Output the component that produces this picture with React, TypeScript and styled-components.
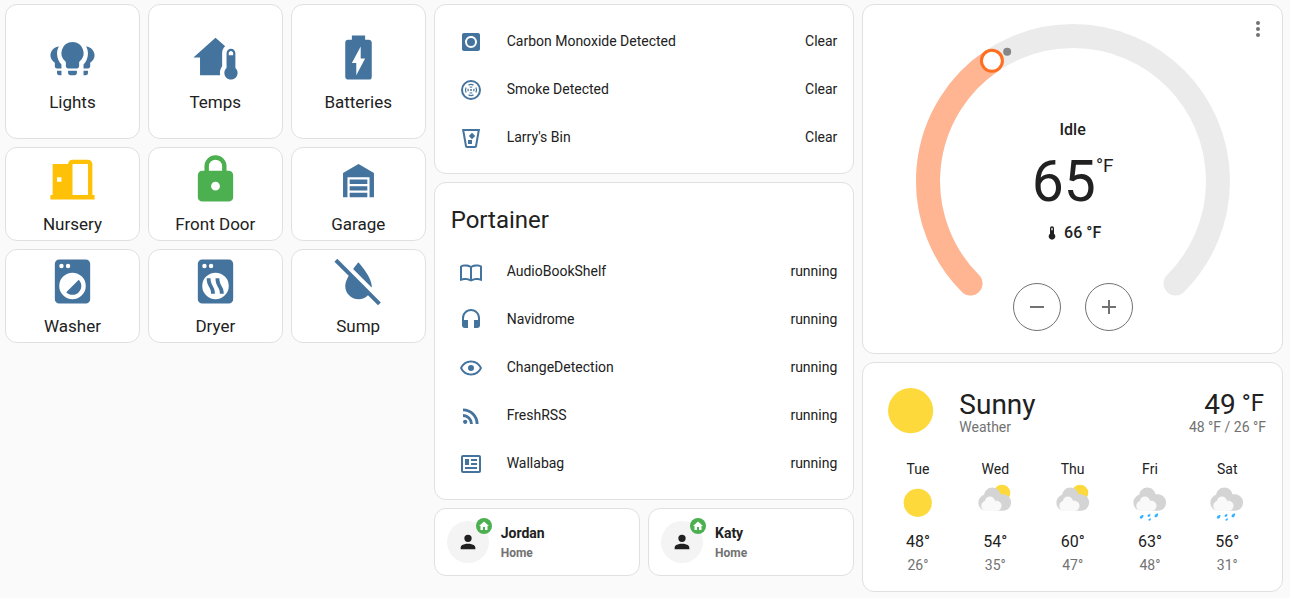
import React from "react";
import styled, { createGlobalStyle } from "styled-components";

const BLUE = "#44739e";
const GREEN = "#4caf50";
const AMBER = "#ffc107";
const TEXT = "#212121";
const MUTED = "#727272";

const GlobalStyle = createGlobalStyle`
  *, *::before, *::after { box-sizing: border-box; }
  body {
    margin: 0;
    background: #fafafa;
    color: ${TEXT};
    font-family: Roboto, "Liberation Sans", sans-serif;
    font-size: 14px;
    line-height: 20px;
  }
`;

const Dashboard = styled.main`
  display: grid;
  grid-template-columns: repeat(3, minmax(0, 1fr));
  align-items: start;
  gap: 8px;
  padding: 4px 7px 4px 5px;
`;

const Column = styled.div`
  display: flex;
  flex-direction: column;
  gap: 8px;
`;

const Card = styled.section`
  background: #fff;
  border: 1px solid #e0e0e0;
  border-radius: 12px;
`;

const TileRow = styled.div`
  display: grid;
  grid-template-columns: repeat(3, minmax(0, 1fr));
  gap: 8px;
`;

const Tile = styled.button<{ $square?: boolean }>`
  display: flex;
  flex-direction: column;
  align-items: center;
  justify-content: center;
  gap: 8px;
  padding: ${(p) => (p.$square ? "6px 5px 5px" : "5px 5px 6px")};
  aspect-ratio: ${(p) => (p.$square ? "1" : "auto")};
  background: #fff;
  border: 1px solid #e0e0e0;
  border-radius: 12px;
  color: ${TEXT};
  font: inherit;
  font-size: 17px;
  line-height: 20px;
  cursor: pointer;
`;

const Glyph = styled.svg<{ $size: number; $color?: string }>`
  display: block;
  flex: none;
  width: ${(p) => p.$size}px;
  height: ${(p) => p.$size}px;
  fill: ${(p) => p.$color ?? "currentColor"};
`;

const EntityList = styled.ul`
  display: flex;
  flex-direction: column;
  gap: 8px;
  margin: 0;
  padding: 16px;
  list-style: none;
`;

const EntityRow = styled.li`
  display: flex;
  align-items: center;
  height: 40px;
`;

const EntityIcon = styled.span`
  display: flex;
  justify-content: center;
  width: 40px;
  margin-right: 16px;
  padding-top: 2px;
`;

const EntityName = styled.span`
  flex: 1;
`;

const CardTitle = styled.h2`
  margin: 0;
  padding: 13px 16px 0;
  font-size: 24px;
  font-weight: 400;
  line-height: 48px;
`;

const TitledList = styled(EntityList)`
  padding-top: 7px;
`;

const People = styled.div`
  display: grid;
  grid-template-columns: repeat(2, minmax(0, 1fr));
  gap: 8px;
`;

const PersonCard = styled.button`
  display: flex;
  align-items: center;
  gap: 12px;
  padding: 12px;
  background: #fff;
  border: 1px solid #e0e0e0;
  border-radius: 12px;
  color: ${TEXT};
  font: inherit;
  font-weight: 700;
  text-align: left;
  cursor: pointer;
`;

const Avatar = styled.span`
  position: relative;
  display: grid;
  place-items: center;
  width: 42px;
  height: 42px;
  border-radius: 50%;
  background: #f4f4f4;
`;

const HomeBadge = styled.span`
  position: absolute;
  top: -3px;
  right: -3px;
  display: grid;
  place-items: center;
  width: 16px;
  height: 16px;
  border-radius: 50%;
  background: ${GREEN};
  color: #fff;
`;

const PersonText = styled.span`
  display: flex;
  flex-direction: column;
  padding-top: 2px;
`;

const PersonState = styled.span`
  color: ${MUTED};
  font-size: 12px;
`;

const ThermostatCard = styled(Card)`
  position: relative;
  display: grid;
  justify-items: center;
  padding: 16px 16px 12px;
`;

const MenuButton = styled.button`
  position: absolute;
  top: 0;
  right: 0;
  display: grid;
  place-items: center;
  width: 48px;
  height: 48px;
  padding: 0;
  border: 0;
  background: none;
  color: ${MUTED};
  cursor: pointer;
`;

const Dial = styled.svg`
  grid-area: 1 / 1;
  display: block;
  width: 320px;
  height: 320px;
`;

const Reading = styled.div`
  grid-area: 1 / 1;
  align-self: center;
  display: flex;
  flex-direction: column;
  align-items: center;
  gap: 12px;
  padding-top: 1px;
  font-size: 16px;
  font-weight: 500;
`;

const Target = styled.div`
  display: flex;
  align-items: flex-start;
  font-size: 57px;
  font-weight: 400;
  line-height: 59px;
`;

const TargetUnit = styled.span`
  padding-top: 4px;
  font-size: 19px;
  line-height: 20px;
`;

const Current = styled.div`
  display: flex;
  align-items: center;
  gap: 4px;
`;

const Steppers = styled.div`
  grid-area: 1 / 1;
  align-self: end;
  display: flex;
  gap: 24px;
  padding-bottom: 10px;
`;

const Stepper = styled.button`
  display: grid;
  place-items: center;
  width: 48px;
  height: 48px;
  padding: 0;
  border: 1px solid ${MUTED};
  border-radius: 50%;
  background: none;
  color: ${MUTED};
  cursor: pointer;
`;

const WeatherCard = styled(Card)`
  display: flex;
  flex-direction: column;
  gap: 16px;
  padding: 16px;
`;

const WeatherNow = styled.div`
  display: flex;
  align-items: center;
  gap: 16px;
`;

const WeatherText = styled.div<{ $end?: boolean }>`
  display: flex;
  flex-direction: column;
  flex: ${(p) => (p.$end ? "none" : "1")};
  align-items: ${(p) => (p.$end ? "flex-end" : "flex-start")};
  padding-top: 8px;
  color: ${MUTED};
`;

const WeatherMain = styled.div`
  display: flex;
  gap: 6px;
  color: ${TEXT};
  font-size: 28px;
  line-height: 24px;
`;

const WeatherUnit = styled.span`
  padding-right: 2px;
  font-size: 24px;
  line-height: 20px;
`;

const Forecast = styled.div`
  display: grid;
  grid-template-columns: repeat(5, minmax(0, 1fr));
`;

const Day = styled.div`
  display: flex;
  flex-direction: column;
  align-items: center;
`;

const DayIcon = styled.div`
  padding: 4px 0 6px;
`;

const High = styled.span`
  font-size: 16px;
  line-height: 26px;
`;

const Low = styled.span`
  color: ${MUTED};
`;

const paths = {
  homeThermometer:
    "M19 8C20.11 8 21 8.9 21 10V16.76C21.61 17.31 22 18.11 22 19C22 20.66 20.66 22 19 22C17.34 22 16 20.66 16 19C16 18.11 16.39 17.31 17 16.76V10C17 8.9 17.9 8 19 8M19 9C18.45 9 18 9.45 18 10V11H20V10C20 9.45 19.55 9 19 9M5 20V12H2L12 3L16.4 6.96C15.54 7.69 15 8.78 15 10V15.97C14.37 16.84 14 17.87 14 19L14.1 20H5Z",
  battery:
    "M16.67,4H15V2H9V4H7.33A1.33,1.33 0 0,0 6,5.33V20.67C6,21.4 6.6,22 7.33,22H16.67A1.33,1.33 0 0,0 18,20.67V5.33C18,4.6 17.4,4 16.67,4M11,20V14.5H9L13,7V12.5H15L11,20Z",
  door: "M12,3C10.89,3 10,3.89 10,5H3V19H2V21H22V19H21V5C21,3.89 20.11,3 19,3H12M12,5H19V19H12V5M5,11H7V13H5V11Z",
  lock: "M12,17A2,2 0 0,0 14,15C14,13.89 13.1,13 12,13A2,2 0 0,0 10,15A2,2 0 0,0 12,17M18,8A2,2 0 0,1 20,10V20A2,2 0 0,1 18,22H6A2,2 0 0,1 4,20V10C4,8.89 4.9,8 6,8H7V6A5,5 0 0,1 12,1A5,5 0 0,1 17,6V8H18M12,3A3,3 0 0,0 9,6V8H15V6A3,3 0 0,0 12,3Z",
  garage: "M19,20H17V11H7V20H5V9L12,5L19,9V20M8,12H16V14H8V12M8,15H16V17H8V15M16,18V20H8V18H16Z",
  washer:
    "M14.83,11.17C16.39,12.73 16.39,15.27 14.83,16.83C13.27,18.39 10.73,18.39 9.17,16.83L14.83,11.17M6,2H18A2,2 0 0,1 20,4V20A2,2 0 0,1 18,22H6A2,2 0 0,1 4,20V4A2,2 0 0,1 6,2M7,4A1,1 0 0,0 6,5A1,1 0 0,0 7,6A1,1 0 0,0 8,5A1,1 0 0,0 7,4M10,4A1,1 0 0,0 9,5A1,1 0 0,0 10,6A1,1 0 0,0 11,5A1,1 0 0,0 10,4M12,8A6,6 0 0,0 6,14A6,6 0 0,0 12,20A6,6 0 0,0 18,14A6,6 0 0,0 12,8Z",
  dryer:
    "M6,2H18A2,2 0 0,1 20,4V20A2,2 0 0,1 18,22H6A2,2 0 0,1 4,20V4A2,2 0 0,1 6,2M7,4A1,1 0 0,0 6,5A1,1 0 0,0 7,6A1,1 0 0,0 8,5A1,1 0 0,0 7,4M10,4A1,1 0 0,0 9,5A1,1 0 0,0 10,6A1,1 0 0,0 11,5A1,1 0 0,0 10,4M12,8A6,6 0 0,0 6,14A6,6 0 0,0 12,20A6,6 0 0,0 18,14A6,6 0 0,0 12,8ZM8,10.5H9.75C9.75,14 11.75,14 11.75,17.5H10C10,14.3 8,14.3 8,10.5ZM12,10.5H13.75C13.75,14 15.75,14 15.75,17.5H14C14,14.3 12,14.3 12,10.5Z",
  waterOff:
    "M20.84 22.73L16.29 18.18C15.2 19.3 13.69 20 12 20C8.69 20 6 17.31 6 14C6 12.67 6.67 11.03 7.55 9.44L1.11 3L2.39 1.73L22.11 21.46L20.84 22.73M18 14C18 10 12 3.25 12 3.25S10.84 4.55 9.55 6.35L17.95 14.75C18 14.5 18 14.25 18 14Z",
  coDetector:
    "M12,18A6,6 0 0,0 18,12C18,8.68 15.31,6 12,6C8.68,6 6,8.68 6,12A6,6 0 0,0 12,18M19,3A2,2 0 0,1 21,5V19A2,2 0 0,1 19,21H5C3.89,21 3,20.1 3,19V5C3,3.89 3.89,3 5,3H19M8,12A4,4 0 0,1 12,8A4,4 0 0,1 16,12A4,4 0 0,1 12,16A4,4 0 0,1 8,12Z",
  bin: "M21.03,3L18,20.31C17.83,21.27 17,22 16,22H8C7,22 6.17,21.27 6,20.31L2.97,3H21.03M5.36,5L8,20H16L18.64,5H5.36M9,18V14H13V18H9M13,13.18L9.82,10L13,6.82L16.18,10L13,13.18Z",
  book: "M12 21.5C10.65 20.65 8.2 20 6.5 20C4.85 20 3.15 20.3 1.75 21.05C1.65 21.1 1.6 21.1 1.5 21.1C1.25 21.1 1 20.85 1 20.6V6C1.6 5.55 2.25 5.25 3 5C4.11 4.65 5.33 4.5 6.5 4.5C8.45 4.5 10.55 4.9 12 6C13.45 4.9 15.55 4.5 17.5 4.5C18.67 4.5 19.89 4.65 21 5C21.75 5.25 22.4 5.55 23 6V20.6C23 20.85 22.75 21.1 22.5 21.1C22.4 21.1 22.35 21.1 22.25 21.05C20.85 20.3 19.15 20 17.5 20C15.8 20 13.35 20.65 12 21.5M11 7.5C9.64 6.9 7.84 6.5 6.5 6.5C5.3 6.5 4.1 6.65 3 7V18.5C4.1 18.15 5.3 18 6.5 18C7.84 18 9.64 18.4 11 19V7.5M13 19C14.36 18.4 16.16 18 17.5 18C18.7 18 19.9 18.15 21 18.5V7C19.9 6.65 18.7 6.5 17.5 6.5C16.16 6.5 14.36 6.9 13 7.5V19Z",
  headphones:
    "M12,1C7,1 3,5 3,10V17A3,3 0 0,0 6,20H9V12H5V10A7,7 0 0,1 12,3A7,7 0 0,1 19,10V12H15V20H18A3,3 0 0,0 21,17V10C21,5 16.97,1 12,1Z",
  eye: "M12,9A3,3 0 0,1 15,12A3,3 0 0,1 12,15A3,3 0 0,1 9,12A3,3 0 0,1 12,9M12,4.5C17,4.5 21.27,7.61 23,12C21.27,16.39 17,19.5 12,19.5C7,19.5 2.73,16.39 1,12C2.73,7.61 7,4.5 12,4.5M3.18,12C4.83,15.36 8.24,17.5 12,17.5C15.76,17.5 19.17,15.36 20.82,12C19.17,8.64 15.76,6.5 12,6.5C8.24,6.5 4.83,8.64 3.18,12Z",
  rss: "M6.18,15.64A2.18,2.18 0 0,1 8.36,17.82C8.36,19 7.38,20 6.18,20C5,20 4,19 4,17.82A2.18,2.18 0 0,1 6.18,15.64M4,4.44A15.56,15.56 0 0,1 19.56,20H16.73A12.73,12.73 0 0,0 4,7.27V4.44M4,10.1A9.9,9.9 0 0,1 13.9,20H11.07A7.07,7.07 0 0,0 4,12.93V10.1Z",
  newspaper:
    "M20 5L20 19L4 19L4 5H20M20 3H4C2.89 3 2 3.89 2 5V19C2 20.11 2.89 21 4 21H20C21.11 21 22 20.11 22 19V5C22 3.89 21.11 3 20 3M18 15H6V17H18V15M10 7H6V13H10V7M12 9H18V7H12V9M18 11H12V13H18V11Z",
  account:
    "M12,4A4,4 0 0,1 16,8A4,4 0 0,1 12,12A4,4 0 0,1 8,8A4,4 0 0,1 12,4M12,14C16.42,14 20,15.79 20,18V20H4V18C4,15.79 7.58,14 12,14Z",
  home: "M10,20V14H14V20H19V12H22L12,3L2,12H5V20H10Z",
  thermometer:
    "M15 13V5A3 3 0 0 0 9 5V13A5 5 0 1 0 15 13M12 4A1 1 0 0 1 13 5V8H11V5A1 1 0 0 1 12 4Z",
  dots: "M12,16A2,2 0 0,1 14,18A2,2 0 0,1 12,20A2,2 0 0,1 10,18A2,2 0 0,1 12,16M12,10A2,2 0 0,1 14,12A2,2 0 0,1 12,14A2,2 0 0,1 10,12A2,2 0 0,1 12,10M12,4A2,2 0 0,1 14,6A2,2 0 0,1 12,8A2,2 0 0,1 10,6A2,2 0 0,1 12,4Z",
  minus: "M19,13H5V11H19V13Z",
  plus: "M19,13H13V19H11V13H5V11H11V5H13V11H19V13Z",
};

type IconName = keyof typeof paths | "bulbs" | "smoke";

const SIDE_BULB =
  "M5.8 7C3.6 7.2 2 9 2 11C2 12.4 2.8 13.6 4 14.4V16C4 16.6 4.4 17 5 17H7V15.2C5.7 14 5 12.1 5 10.2C5 9 5.3 8 5.8 7ZM5 18V19C5 19.6 5.4 20 6 20H7V18H5Z";

function Icon({ name, size = 24, color }: { name: IconName; size?: number; color?: string }) {
  return (
    <Glyph viewBox="0 0 24 24" $size={size} $color={color} aria-hidden="true">
      {name === "bulbs" ? (
        <>
          <path d="M12 5A5 5 0 0 0 9 14V16C9 16.55 9.45 17 10 17H14C14.55 17 15 16.55 15 16V14A5 5 0 0 0 12 5M10 18V19C10 19.55 10.45 20 11 20H13C13.55 20 14 19.55 14 19V18H10Z" />
          <path d={SIDE_BULB} />
          <path d={SIDE_BULB} transform="translate(24 0) scale(-1 1)" />
        </>
      ) : name === "smoke" ? (
        <g fill="none" stroke={color}>
          <circle cx="12" cy="12" r="9" strokeWidth="2" />
          <path
            strokeWidth="1.2"
            d="M9.5 7.1A5.5 5.5 0 0 1 14.5 7.1M16.9 9.5A5.5 5.5 0 0 1 16.9 14.5M14.5 16.9A5.5 5.5 0 0 1 9.5 16.9M7.1 14.5A5.5 5.5 0 0 1 7.1 9.5"
          />
          <path
            strokeWidth="1.2"
            d="M10.7 9.3A3 3 0 0 1 13.3 9.3M14.7 10.7A3 3 0 0 1 14.7 13.3M13.3 14.7A3 3 0 0 1 10.7 14.7M9.3 13.3A3 3 0 0 1 9.3 10.7"
          />
          <circle cx="12" cy="12" r="1" fill={color} stroke="none" />
        </g>
      ) : (
        <path d={paths[name]} />
      )}
    </Glyph>
  );
}

interface TileData {
  label: string;
  icon: IconName;
  color?: string;
}

const tileRows: TileData[][] = [
  [
    { label: "Lights", icon: "bulbs" },
    { label: "Temps", icon: "homeThermometer" },
    { label: "Batteries", icon: "battery" },
  ],
  [
    { label: "Nursery", icon: "door", color: AMBER },
    { label: "Front Door", icon: "lock", color: GREEN },
    { label: "Garage", icon: "garage" },
  ],
  [
    { label: "Washer", icon: "washer" },
    { label: "Dryer", icon: "dryer" },
    { label: "Sump", icon: "waterOff" },
  ],
];

interface Entity {
  name: string;
  icon: IconName;
  state: string;
}

const sensors: Entity[] = [
  { name: "Carbon Monoxide Detected", icon: "coDetector", state: "Clear" },
  { name: "Smoke Detected", icon: "smoke", state: "Clear" },
  { name: "Larry's Bin", icon: "bin", state: "Clear" },
];

const containers: Entity[] = [
  { name: "AudioBookShelf", icon: "book", state: "running" },
  { name: "Navidrome", icon: "headphones", state: "running" },
  { name: "ChangeDetection", icon: "eye", state: "running" },
  { name: "FreshRSS", icon: "rss", state: "running" },
  { name: "Wallabag", icon: "newspaper", state: "running" },
];

function Entities({ items }: { items: Entity[] }) {
  return (
    <>
      {items.map((item) => (
        <EntityRow key={item.name}>
          <EntityIcon>
            <Icon name={item.icon} color={BLUE} />
          </EntityIcon>
          <EntityName>{item.name}</EntityName>
          <span>{item.state}</span>
        </EntityRow>
      ))}
    </>
  );
}

type Sky = "sunny" | "partly" | "rainy";

const RAIN_DROPS = [
  { x: 4.96, y: 14.4, r: 0.75 },
  { x: 8.08, y: 13.8, r: 0.6 },
  { x: 11.2, y: 13.8, r: 0.75 },
  { x: 8.4, y: 15.5, r: 0.5 },
];

function WeatherIcon({ sky, size }: { sky: Sky; size: number }) {
  return (
    <Glyph viewBox="0 0 17 17" $size={size} aria-hidden="true">
      {sky === "sunny" && <circle cx="8.4" cy="8.4" r="6" fill="#fdd93c" />}
      {sky === "partly" && <circle cx="11.5" cy="4.21" r="3.48" fill="#fdd93c" />}
      {sky !== "sunny" && (
        <>
          <path
            fill="#d4d4d4"
            d="m3.8863 5.035c-0.54892 0.16898-1.04 0.46637-1.4372 0.8636-0.63077 0.63041-1.0206 1.4933-1.0206 2.455 0 1.9251 1.5589 3.4682 3.4837 3.4682h6.9688c1.9251 0 3.484-1.5981 3.484-3.5232 0-1.9251-1.5589-3.5232-3.484-3.5232h-1.0834c-0.25294-1.6916-1.6986-2.9083-3.4463-2.9083-1.7995 0-3.2805 1.4153-3.465 3.1679"
          />
          <path
            fill="#f9f9f9"
            d="m4.1996 7.6995c-0.33902 0.10407-0.64276 0.28787-0.88794 0.5334-0.39017 0.38982-0.63147 0.92322-0.63147 1.5176 0 1.1896 0.96414 2.1431 2.1537 2.1431h4.3071c1.1896 0 2.153-0.98742 2.153-2.1777 0-1.1896-0.96344-2.1777-2.153-2.1777h-0.66992c-0.15593-1.0449-1.0499-1.7974-2.1297-1.7974-1.112 0-2.0274 0.87524-2.1417 1.9586"
          />
        </>
      )}
      {sky === "rainy" &&
        RAIN_DROPS.map((d) => (
          <path
            key={`${d.x}-${d.y}`}
            fill="#30b3ff"
            transform={`translate(${d.x} ${d.y}) scale(${d.r})`}
            d="M1 -1.05C1.05 -0.3 0.85 0.25 0.45 0.7C0.05 1.1 -0.5 1.15 -0.85 0.8C-1.15 0.5 -1.05 -0.1 -0.7 -0.45C-0.3 -0.8 0.4 -1 1 -1.05Z"
          />
        ))}
    </Glyph>
  );
}

const forecast: { day: string; sky: Sky; high: number; low: number }[] = [
  { day: "Tue", sky: "sunny", high: 48, low: 26 },
  { day: "Wed", sky: "partly", high: 54, low: 35 },
  { day: "Thu", sky: "partly", high: 60, low: 47 },
  { day: "Fri", sky: "rainy", high: 63, low: 48 },
  { day: "Sat", sky: "rainy", high: 56, low: 31 },
];

const RADIUS = 145;
const START = 135;

function point(angle: number) {
  const a = (angle * Math.PI) / 180;
  return { x: RADIUS * Math.cos(a), y: RADIUS * Math.sin(a) };
}

function arc(from: number, to: number) {
  const a = point(from);
  const b = point(to);
  return `M${a.x} ${a.y}A${RADIUS} ${RADIUS} 0 ${to - from > 180 ? 1 : 0} 1 ${b.x} ${b.y}`;
}

function ThermostatDial() {
  const handle = point(START + 101);
  const current = point(START + 108);
  return (
    <Dial viewBox="-160 -160 320 320" fill="none" aria-hidden="true">
      <path d={arc(START, START + 270)} stroke="#ebebeb" strokeWidth="24" strokeLinecap="round" />
      <path d={arc(START, START + 101)} stroke="#ffb591" strokeWidth="24" strokeLinecap="round" />
      <circle cx={current.x} cy={current.y} r="4" fill="#868686" />
      <circle cx={handle.x} cy={handle.y} r="10.5" fill="#fff" stroke="#ff6f22" strokeWidth="3" />
    </Dial>
  );
}

export default function App() {
  return (
    <>
      <GlobalStyle />
      <Dashboard>
        <Column>
          {tileRows.map((row, i) => (
            <TileRow key={row[0].label}>
              {row.map((t) => (
                <Tile key={t.label} type="button" $square={i === 0}>
                  <Icon name={t.icon} size={53} color={t.color ?? BLUE} />
                  {t.label}
                </Tile>
              ))}
            </TileRow>
          ))}
        </Column>

        <Column>
          <Card>
            <EntityList>
              <Entities items={sensors} />
            </EntityList>
          </Card>
          <Card>
            <CardTitle>Portainer</CardTitle>
            <TitledList>
              <Entities items={containers} />
            </TitledList>
          </Card>
          <People>
            {["Jordan", "Katy"].map((name) => (
              <PersonCard key={name} type="button">
                <Avatar>
                  <Icon name="account" size={22} />
                  <HomeBadge>
                    <Icon name="home" size={12} />
                  </HomeBadge>
                </Avatar>
                <PersonText>
                  <span>{name}</span>
                  <PersonState>Home</PersonState>
                </PersonText>
              </PersonCard>
            ))}
          </People>
        </Column>

        <Column>
          <ThermostatCard>
            <ThermostatDial />
            <Reading>
              <span>Idle</span>
              <Target>
                65<TargetUnit>°F</TargetUnit>
              </Target>
              <Current>
                <Icon name="thermometer" size={16} />
                66 °F
              </Current>
            </Reading>
            <Steppers>
              <Stepper type="button" aria-label="Decrease temperature">
                <Icon name="minus" />
              </Stepper>
              <Stepper type="button" aria-label="Increase temperature">
                <Icon name="plus" />
              </Stepper>
            </Steppers>
            <MenuButton type="button" aria-label="More options">
              <Icon name="dots" />
            </MenuButton>
          </ThermostatCard>

          <WeatherCard>
            <WeatherNow>
              <WeatherIcon sky="sunny" size={64} />
              <WeatherText>
                <WeatherMain>Sunny</WeatherMain>
                <span>Weather</span>
              </WeatherText>
              <WeatherText $end>
                <WeatherMain>
                  49<WeatherUnit>°F</WeatherUnit>
                </WeatherMain>
                <span>48 °F / 26 °F</span>
              </WeatherText>
            </WeatherNow>
            <Forecast>
              {forecast.map((f) => (
                <Day key={f.day}>
                  <span>{f.day}</span>
                  <DayIcon>
                    <WeatherIcon sky={f.sky} size={40} />
                  </DayIcon>
                  <High>{f.high}°</High>
                  <Low>{f.low}°</Low>
                </Day>
              ))}
            </Forecast>
          </WeatherCard>
        </Column>
      </Dashboard>
    </>
  );
}
